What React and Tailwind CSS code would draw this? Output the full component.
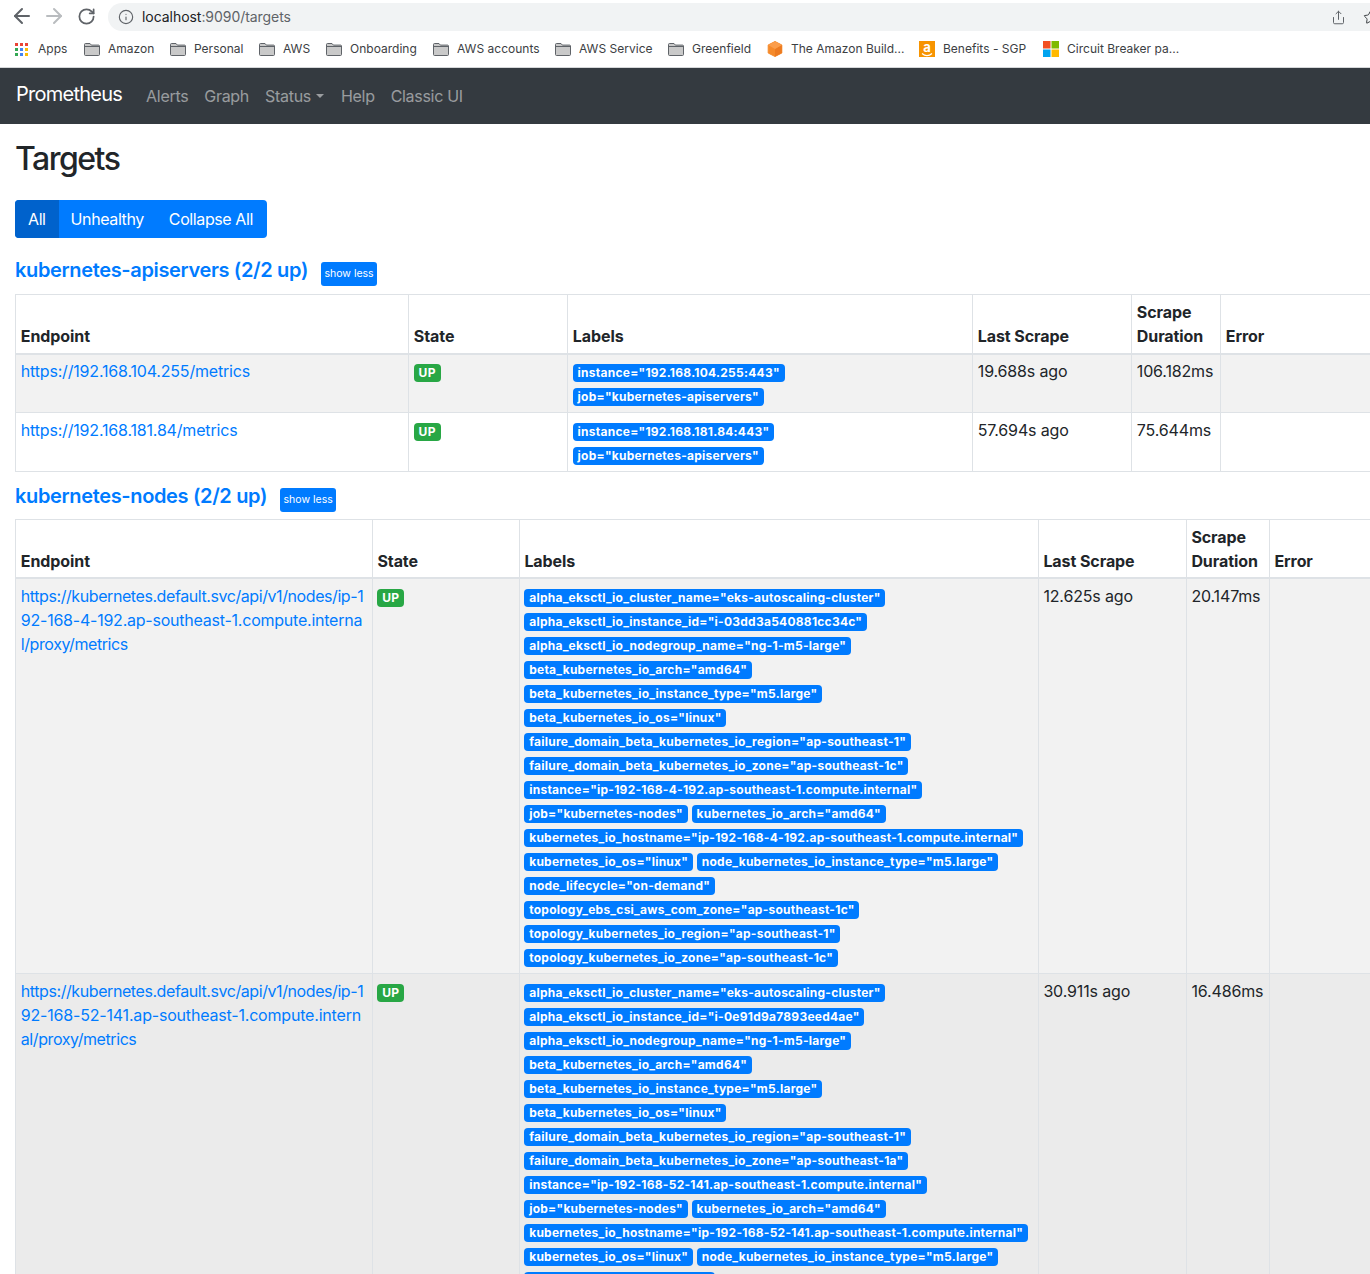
import React from "react";
import { ArrowLeft, ArrowRight, RotateCw, Info, Share, Star } from "lucide-react";

const Folder = () => (
  <svg width="16" height="13" viewBox="0 0 16 13">
    <path d="M.5 11.6V1.4C.5 .9 .9 .5 1.4 .5H6l1.4 1.6h7.2c.5 0 .9.4.9.9v8.6c0 .5-.4.9-.9.9H1.4c-.5 0-.9-.4-.9-.9z" fill="#c9c9c9" stroke="#5f6368" strokeWidth="1" />
    <path d="M.5 3.5H15.5" stroke="#5f6368" strokeWidth="1" />
  </svg>
);
const AppsIcon = () => (
  <svg width="13" height="13" viewBox="0 0 13 13">
    {[["#ea4335", 0, 0], ["#ea4335", 5, 0], ["#ea4335", 10, 0], ["#34a853", 0, 5], ["#4285f4", 5, 5], ["#fbbc04", 10, 5], ["#34a853", 0, 10], ["#4285f4", 5, 10], ["#fbbc04", 10, 10]].map(([c, x, y], i) => (
      <rect key={i} x={x} y={y} width="3" height="3" fill={c} />
    ))}
  </svg>
);
const Cube = () => (
  <svg width="16" height="16" viewBox="0 0 16 16">
    <path d="M8 0.5L14.8 4V12L8 15.5L1.2 12V4Z" fill="#f58a2a" stroke="#f58a2a" strokeLinejoin="round" />
    <path d="M8 8L14.8 4V12L8 15.5Z" fill="#ec7a20" />
    <path d="M8 0.5L14.8 4L8 8L1.2 4Z" fill="#fb9d4a" />
  </svg>
);
const AmazonIcon = () => (
  <div className="w-[16px] h-[16px] bg-[#f79400] flex flex-col items-center">
    <span className="text-white font-bold text-[13px] leading-[12px]">a</span>
    <svg width="12" height="4" viewBox="0 0 12 4"><path d="M1 .5C4 3.2 8 3.2 11 .5" stroke="#fff" strokeWidth="1.2" fill="none" /></svg>
  </div>
);
const MsIcon = () => (
  <svg width="16" height="16" viewBox="0 0 16 16">
    <rect width="7.5" height="7.5" fill="#f25022" />
    <rect x="8.5" width="7.5" height="7.5" fill="#7fba00" />
    <rect y="8.5" width="7.5" height="7.5" fill="#00a4ef" />
    <rect x="8.5" y="8.5" width="7.5" height="7.5" fill="#ffb900" />
  </svg>
);

const bookmarks = [
  [<AppsIcon />, "Apps", 15, 84, "w-[23px]"],
  [<Folder />, "Amazon", 84, 170, "w-[24px]"],
  [<Folder />, "Personal", 170, 259, "w-[24px]"],
  [<Folder />, "AWS", 259, 326, "w-[24px]"],
  [<Folder />, "Onboarding", 326, 433, "w-[24px]"],
  [<Folder />, "AWS accounts", 433, 555, "w-[24px]"],
  [<Folder />, "AWS Service", 555, 668, "w-[24px]"],
  [<Folder />, "Greenfield", 668, 767, "w-[24px]"],
  [<Cube />, "The Amazon Build...", 767, 919, "w-[24px]"],
  [<AmazonIcon />, "Benefits - SGP", 919, 1043, "w-[24px]"],
  [<MsIcon />, "Circuit Breaker pa...", 1043, 1200, "w-[24px]"],
];

const Label = ({ children }) => (
  <span className="inline-block mr-[4px] px-[4.8px] py-[3px] rounded-[4px] bg-[#007bff] text-white text-[12px] font-bold leading-[12px] align-baseline whitespace-nowrap tracking-[0.25px]">
    {children}
  </span>
);
const Up = () => (
  <span className="inline-block px-[4.8px] py-[3px] rounded-[4px] bg-[#28a745] text-white text-[12px] font-bold leading-[12px] tracking-[0.4px]">UP</span>
);

const Th = ({ children, w }) => (
  <th className="border border-[#dee2e6] border-b-2 p-[4.8px] text-left align-bottom font-bold text-[#212529] tracking-[-0.08px]" style={{ width: w }}>
    {children}
  </th>
);
const Td = ({ children }) => (
  <td className="border border-[#dee2e6] p-[4.8px] align-top">{children}</td>
);

const TargetTable = ({ widths, rows, even }) => (
  <table className="table-fixed border-collapse w-[1440px] max-w-none text-[#212529] tracking-[-0.15px]">
    <thead>
      <tr>
        <Th w={widths[0]}>Endpoint</Th>
        <Th w={widths[1]}>State</Th>
        <Th w={widths[2]}>Labels</Th>
        <Th w={widths[3]}>Last Scrape</Th>
        <Th w={widths[4]}>Scrape Duration</Th>
        <Th>Error</Th>
      </tr>
    </thead>
    <tbody>
      {rows.map((r, i) => (
        <tr key={i} className={i % 2 === 0 ? "bg-[#f2f2f2]" : even}>
          <Td>
            <a className="text-[#007bff]">
              {r.url.map(([t, c]) => <span key={t} className={"block whitespace-nowrap " + c}>{t}</span>)}
            </a>
          </Td>
          <Td><Up /></Td>
          <Td>
            {r.labels.map((g, j) => (
              <div key={j} className="leading-[24px] h-[24px] whitespace-nowrap">
                {g.map((l) => <Label key={l}>{l}</Label>)}
              </div>
            ))}
          </Td>
          <Td>{r.scrape}</Td>
          <Td>{r.dur}</Td>
          <Td />
        </tr>
      ))}
    </tbody>
  </table>
);

const Heading = ({ children, mt, btn }) => (
  <div className={"flex items-center h-[34px] " + mt}>
    <a className="text-[#007bff] text-[20px] font-semibold leading-[24px] tracking-[-0.35px] -mt-[2px]">{children}</a>
    <button className={"ml-[13px] h-[24px] px-[3.5px] rounded-[3px] bg-[#007bff] text-white text-[10.5px] leading-[24px] " + btn}>show less</button>
  </div>
);

const nodeLabels = (id, host, zone) => [
  ['alpha_eksctl_io_cluster_name="eks-autoscaling-cluster"'],
  [`alpha_eksctl_io_instance_id="${id}"`],
  ['alpha_eksctl_io_nodegroup_name="ng-1-m5-large"'],
  ['beta_kubernetes_io_arch="amd64"'],
  ['beta_kubernetes_io_instance_type="m5.large"'],
  ['beta_kubernetes_io_os="linux"'],
  ['failure_domain_beta_kubernetes_io_region="ap-southeast-1"'],
  [`failure_domain_beta_kubernetes_io_zone="${zone}"`],
  [`instance="${host}"`],
  ['job="kubernetes-nodes"', 'kubernetes_io_arch="amd64"'],
  [`kubernetes_io_hostname="${host}"`],
  ['kubernetes_io_os="linux"', 'node_kubernetes_io_instance_type="m5.large"'],
  ['node_lifecycle="on-demand"'],
  ['topology_ebs_csi_aws_com_zone="' + zone + '"'],
  ['topology_kubernetes_io_region="ap-southeast-1"'],
  [`topology_kubernetes_io_zone="${zone}"`],
];

export default function App() {
  return (
    <div className="h-[1274px] w-[1370px] overflow-hidden bg-white font-['Inter','Liberation_Sans',sans-serif] text-[16px] leading-[24px] text-[#212529]">
      <div className="h-[32px] flex items-center pl-[10px] text-[#5f6368]">
        <ArrowLeft size={24} strokeWidth={2} className="mr-[8px]" />
        <ArrowRight size={24} strokeWidth={2} className="mr-[11px] text-[#b9bcbf]" />
        <RotateCw size={19} strokeWidth={2.2} className="mr-[12px]" />
        <div className="flex-1 h-[28px] mt-[2px] rounded-l-[14px] bg-[#f1f3f4] flex items-center pl-[10px] pr-[24px] text-[14px] tracking-[-0.05px]">
          <Info size={16} strokeWidth={1.7} className="mr-[8px]" />
          <span className="text-[#202124]">localhost</span><span className="text-[#5f6368]">:9090/targets</span>
          <Share size={15} strokeWidth={1.6} className="ml-auto" />
          <Star size={15} strokeWidth={1.6} className="ml-[17px] -mr-[32px] text-[#3c4043]" />
        </div>
      </div>
      <div className="h-[36px] flex items-center border-b border-[#d5d7d9] pb-[1px] text-[12px] text-[#3c4043] tracking-[0.01px]">
        <div className="w-[15px]" />
        {bookmarks.map(([icon, text, x0, x1, iw], i) => (
          <div key={i} className="flex items-center whitespace-nowrap" style={{ width: x1 - x0 }}>
            <span className={"flex items-center shrink-0 " + iw}>{icon}</span><span>{text}</span>
          </div>
        ))}
      </div>
      <nav className="h-[56px] bg-[#343a40] flex items-center pl-[16px] tracking-[-0.3px]">
        <span className="text-white text-[20px] tracking-[-0.75px] mr-[24px] -mt-[4px]">Prometheus</span>
        <div className="flex items-center gap-[16px] text-[#ffffff80]">
          <span>Alerts</span><span>Graph</span>
          <span className="flex items-center">Status<span className="ml-[5px] mr-[1px] w-0 h-0 border-x-[4.8px] border-x-transparent border-t-[4.8px] border-t-[#ffffff80]" /></span>
          <span>Help</span><span>Classic UI</span>
        </div>
      </nav>
      <main className="px-[15px]">
        <h2 className="text-[32px] font-medium leading-[38px] mt-[16px] mb-[22px] tracking-[-1.5px]">Targets</h2>
        <div className="inline-flex h-[38px] rounded-[4px] overflow-hidden text-white bg-[#007bff] align-top tracking-[-0.4px]">
          <span className="bg-[#0062cc] px-[13px] leading-[38px]">All</span>
          <span className="px-[12px] leading-[38px]">Unhealthy</span>
          <span className="pl-[13px] pr-[14px] leading-[38px]">Collapse All</span>
        </div>
        <Heading mt="mt-[16px]" btn="mt-[6px]">kubernetes-apiservers (2/2 up)</Heading>
        <div className="mt-[6px]">
          <TargetTable
            even="bg-white"
            widths={[393, 159, 405, 159, 89]}
            rows={[
              { url: [["https://192.168.104.255/metrics", "tracking-[-0.18px]"]], labels: [['instance="192.168.104.255:443"'], ['job="kubernetes-apiservers"']], scrape: "19.688s ago", dur: "106.182ms" },
              { url: [["https://192.168.181.84/metrics", "tracking-[-0.18px]"]], labels: [['instance="192.168.181.84:443"'], ['job="kubernetes-apiservers"']], scrape: "57.694s ago", dur: "75.644ms" },
            ]}
          />
        </div>
        <Heading mt="mt-[8px]" btn="mt-[7px]">kubernetes-nodes (2/2 up)</Heading>
        <div className="mt-[5.1px]">
          <TargetTable
            even="bg-[#ebebeb]"
            widths={[356.6, 147, 519, 148, 83]}
            rows={[
              { url: [["https://kubernetes.default.svc/api/v1/nodes/ip-1", "tracking-[-0.42px]"], ["92-168-4-192.ap-southeast-1.compute.interna", "tracking-[-0.23px]"], ["l/proxy/metrics", "tracking-[-0.42px]"]], labels: nodeLabels("i-03dd3a540881cc34c", "ip-192-168-4-192.ap-southeast-1.compute.internal", "ap-southeast-1c"), scrape: "12.625s ago", dur: "20.147ms" },
              { url: [["https://kubernetes.default.svc/api/v1/nodes/ip-1", "tracking-[-0.42px]"], ["92-168-52-141.ap-southeast-1.compute.intern", "tracking-[-0.19px]"], ["al/proxy/metrics", "tracking-[-0.42px]"]], labels: nodeLabels("i-0e91d9a7893eed4ae", "ip-192-168-52-141.ap-southeast-1.compute.internal", "ap-southeast-1a"), scrape: "30.911s ago", dur: "16.486ms" },
            ]}
          />
        </div>
      </main>
    </div>
  );
}
